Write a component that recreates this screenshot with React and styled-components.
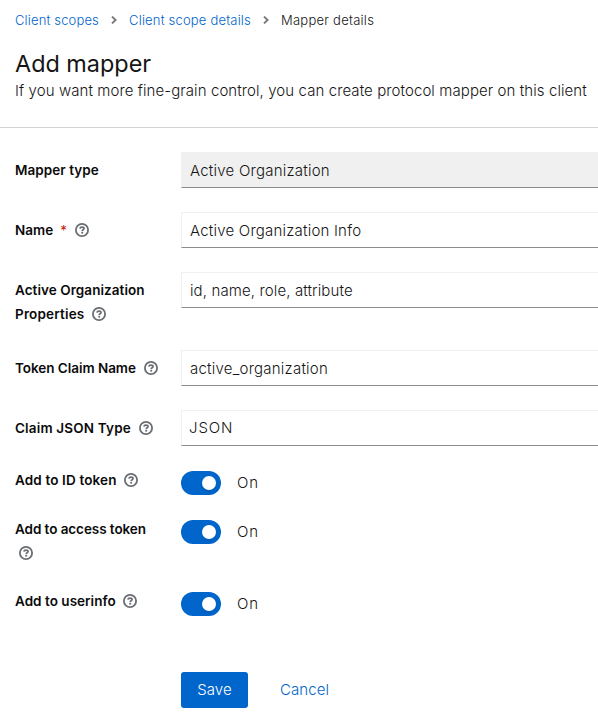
import React from "react";
import styled, { createGlobalStyle } from "styled-components";

const GlobalStyle = createGlobalStyle`
  * { box-sizing: border-box; }
  body {
    margin: 0;
    background: #fff;
    color: #151515;
    font-family: Inter, "Liberation Sans", sans-serif;
    font-size: 15px;
    font-weight: 360;
    overflow: hidden;
  }
`;

const Page = styled.main`
  height: 715px;
  overflow: hidden;
  white-space: nowrap;
`;

const Header = styled.header`
  height: 128px;
  padding: 10px 0 0 15px;
  border-bottom: 1px solid #d2d2d2;
`;

const Breadcrumb = styled.nav`
  display: flex;
  align-items: center;
  height: 20px;
  font-size: 13px;
  line-height: 20px;
`;

const Crumb = styled.span`
  width: ${(p) => p.$width}px;
  letter-spacing: ${(p) => p.$spacing}px;
  color: ${(p) => (p.$current ? "#151515" : "#0066cc")};
`;

const Chevron = styled.svg`
  flex: none;
  width: 6px;
  height: 8px;
  margin: 0 12px;
  fill: none;
  stroke: #75787c;
  stroke-width: 1.9;
`;

const Title = styled.h1`
  margin: 18px 0 0;
  font-size: 23.4px;
  font-weight: 400;
  line-height: 32px;
`;

const Description = styled.p`
  margin: -1px 0 0;
  line-height: 24px;
  letter-spacing: 0.085px;
`;

const Form = styled.form`
  display: grid;
  gap: 24px;
  padding: 24px 0 0 15px;
`;

const Row = styled.div`
  display: grid;
  grid-template-columns: 150px 1fr;
  column-gap: 16px;
  align-items: start;
`;

const Label = styled.label`
  padding: ${(p) => (p.$toggle ? "0 0 2px" : "6px 0 0")};
  margin-top: ${(p) => (p.$toggle ? -2 : 0)}px;
  font-size: 13.5px;
  font-weight: 600;
  line-height: 24px;
  color: #0b0b0b;
`;

const LabelText = styled.span`
  letter-spacing: ${(p) => p.$spacing}px;
`;

const Required = styled.span`
  margin-left: 7px;
  font-weight: 400;
  color: #c9190b;
`;

const HelpGlyph = styled.svg`
  width: 14px;
  height: 14px;
  margin-left: ${(p) => p.$gap}px;
  vertical-align: -2px;
  fill: none;
  stroke: #6a6e73;
`;

const Input = styled.input`
  width: 100%;
  height: 36px;
  padding: 1px 8px 0;
  border: 1px solid #f0f0f0;
  border-right: 0;
  border-bottom-color: #8a8d90;
  border-radius: 0;
  outline: 0;
  background: ${(p) => (p.readOnly ? "#f0f0f0" : "#fff")};
  color: #151515;
  font: inherit;
  letter-spacing: ${(p) => p.$spacing}px;
`;

const Select = styled.button`
  display: block;
  width: 100%;
  height: 36px;
  padding: 0 7px 1px;
  border: 1px solid #f0f0f0;
  border-right: 0;
  border-bottom-color: #8a8d90;
  background: #fff;
  color: #151515;
  font: inherit;
  letter-spacing: 0.9px;
  text-align: left;
`;

const SwitchRow = styled.div`
  display: flex;
  align-items: center;
  gap: 16px;
  height: 24px;
  margin-top: 1px;
  letter-spacing: 0.8px;
`;

const SwitchText = styled.span`
  padding-bottom: 2px;
`;

const Track = styled.span`
  display: flex;
  align-items: center;
  justify-content: flex-end;
  width: 40px;
  height: 24px;
  padding-right: 5px;
  border-radius: 12px;
  background: #0066cc;
`;

const Knob = styled.span`
  width: 14px;
  height: 14px;
  border-radius: 50%;
  background: #fff;
  box-shadow: 0 2px 4px rgba(3, 3, 3, 0.12);
`;

const Actions = styled.div`
  display: flex;
  margin: 32px 0 0 166px;
`;

const Button = styled.button`
  width: ${(p) => (p.$primary ? 67 : 81)}px;
  height: 36px;
  margin-left: ${(p) => (p.$primary ? 0 : 16)}px;
  padding: 0 0 1px;
  border: 0;
  border-radius: 3px;
  background: ${(p) => (p.$primary ? "#0066cc" : "transparent")};
  color: ${(p) => (p.$primary ? "#fff" : "#0066cc")};
  font: inherit;
  letter-spacing: 0.1px;
`;

const Separator = () => (
  <Chevron viewBox="0 0 6 8">
    <path d="M1 0.6 4.6 4 1 7.4" />
  </Chevron>
);

const HelpIcon = ({ gap = 8 }) => (
  <HelpGlyph viewBox="0 0 14 14" $gap={gap}>
    <circle cx="7" cy="7" r="6.1" strokeWidth="1.8" />
    <path d="M4.9 5.7C5.1 4.65 5.9 4.2 7 4.2c1.2 0 2 .5 2 1.4C9 6.8 7.2 6.6 7.2 8.1" strokeWidth="1.75" />
    <path d="M7.2 8.8v1.8" strokeWidth="1.9" />
  </HelpGlyph>
);

const Switch = () => (
  <SwitchRow role="switch" aria-checked="true">
    <Track>
      <Knob />
    </Track>
    <SwitchText>On</SwitchText>
  </SwitchRow>
);

export default function App() {
  return (
    <>
      <GlobalStyle />
      <Page>
        <Header>
          <Breadcrumb>
            <Crumb $width={84} $spacing={0.15}>Client scopes</Crumb>
            <Separator />
            <Crumb $width={122} $spacing={0.19}>Client scope details</Crumb>
            <Separator />
            <Crumb $width={95} $spacing={0.25} $current>Mapper details</Crumb>
          </Breadcrumb>
          <Title>Add mapper</Title>
          <Description>
            If you want more fine-grain control, you can create protocol mapper on this client
          </Description>
        </Header>
        <Form onSubmit={(e) => e.preventDefault()}>
          <Row>
            <Label><LabelText $spacing={0.06}>Mapper type</LabelText></Label>
            <Input readOnly defaultValue="Active Organization" $spacing={0.23} />
          </Row>
          <Row>
            <Label>
              <LabelText $spacing={0.05}>Name</LabelText>
              <Required>*</Required>
              <HelpIcon />
            </Label>
            <Input defaultValue="Active Organization Info" $spacing={0.21} />
          </Row>
          <Row>
            <Label>
              <LabelText $spacing={0.06}>Active Organization</LabelText>
              <br />
              <LabelText $spacing={0.17}>Properties</LabelText>
              <HelpIcon />
            </Label>
            <Input defaultValue="id, name, role, attribute" $spacing={0.12} />
          </Row>
          <Row>
            <Label>
              <LabelText $spacing={-0.04}>Token Claim Name</LabelText>
              <HelpIcon />
            </Label>
            <Input defaultValue="active_organization" $spacing={0.22} />
          </Row>
          <Row>
            <Label>
              <LabelText $spacing={0.17}>Claim JSON Type</LabelText>
              <HelpIcon />
            </Label>
            <Select type="button">JSON</Select>
          </Row>
          <Row>
            <Label $toggle>
              <LabelText $spacing={0.14}>Add to ID token</LabelText>
              <HelpIcon gap={7} />
            </Label>
            <Switch />
          </Row>
          <Row>
            <Label $toggle>
              <LabelText $spacing={-0.07}>Add to access token</LabelText>
              <br />
              <HelpIcon gap={4} />
            </Label>
            <Switch />
          </Row>
          <Row>
            <Label $toggle>
              <LabelText $spacing={0.03}>Add to userinfo</LabelText>
              <HelpIcon gap={7} />
            </Label>
            <Switch />
          </Row>
          <Actions>
            <Button type="submit" $primary>Save</Button>
            <Button type="button">Cancel</Button>
          </Actions>
        </Form>
      </Page>
    </>
  );
}
